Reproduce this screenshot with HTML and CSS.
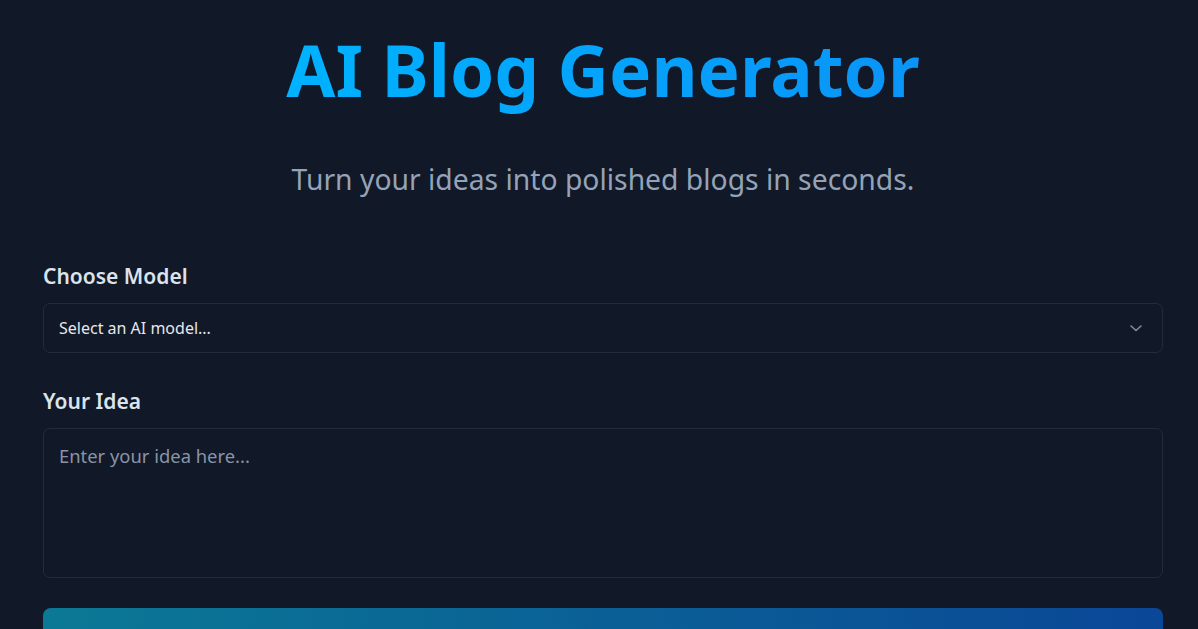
FILE: index.html
```html
<!DOCTYPE html>
<html lang="en">
<head>
<meta charset="utf-8">
<title>AI Blog Generator</title>
<link rel="stylesheet" href="styles.css">
</head>
<body>
<main class="page">
  <header class="hero">
    <h1 class="title">AI Blog Generator</h1>
    <p class="subtitle">Turn your ideas into polished blogs in seconds.</p>
  </header>
  <form class="form">
    <div class="field">
      <label class="label" for="model">Choose Model</label>
      <div class="select" id="model">
        <span class="select-text">Select an AI model...</span>
        <svg class="chevron" width="14" height="14" viewBox="0 0 14 14" fill="none" stroke="currentColor" stroke-width="1.5" stroke-linecap="round" stroke-linejoin="round"><path d="M2 5l5 4.5L12 5"/></svg>
      </div>
    </div>
    <div class="field field-idea">
      <label class="label" for="idea">Your Idea</label>
      <textarea id="idea" class="textarea" placeholder="Enter your idea here..."></textarea>
    </div>
    <button type="button" class="button">Generate Blog</button>
  </form>
</main>
</body>
</html>
```
FILE: styles.css
```css
html, body {
  margin: 0;
  padding: 0;
  background: #111827;
  height: 100%;
  overflow: hidden;
}
body {
  font-family: "Noto Sans", "Open Sans", sans-serif;
  color: #e2e8f0;
}
.page {
  padding: 0 35px 0 43px;
}
.hero {
  text-align: center;
  padding-top: 20px;
}
.title {
  margin: 0;
  font-size: 71px;
  font-weight: 700;
  line-height: 100px;
  background: linear-gradient(90deg, #00b2ff, #0a94f7);
  -webkit-background-clip: text;
  background-clip: text;
  color: transparent;
  display: inline-block;
}
.subtitle {
  margin: 39px 0 0;
  font-size: 28.3px;
  line-height: 40px;
  color: #94a3b8;
}
.form {
  margin-top: 63px;
  display: flex;
  flex-direction: column;
  gap: 30px;
}
.field {
  display: flex;
  flex-direction: column;
  gap: 13px;
}
.field-idea {
  margin-top: 4px;
}
.label {
  font-size: 21px;
  font-weight: 600;
  line-height: 28px;
  color: #dbe3ec;
}
.select {
  height: 48px;
  border: 1px solid #242c3b;
  border-radius: 7px;
  display: flex;
  align-items: center;
  justify-content: space-between;
  padding: 0 19px 0 15px;
}
.select-text {
  font-size: 16px;
  color: #e5e7eb;
}
.chevron {
  color: #8690a0;
}
.textarea {
  display: block;
  border: 1px solid #242c3b;
  border-radius: 7px;
  background: transparent;
  padding: 14px 15px;
  font-family: inherit;
  font-size: 18.4px;
  line-height: 26px;
  color: #e5e7eb;
  resize: none;
  outline: none;
  box-sizing: border-box;
  height: 150px;
}
.textarea::placeholder {
  color: #8a94a6;
}
.button {
  height: 66px;
  border: none;
  border-radius: 8px;
  background: linear-gradient(90deg, #0b7995, #0a4797);
  color: #fff;
  font-family: inherit;
  font-size: 20px;
  font-weight: 600;
}
```
